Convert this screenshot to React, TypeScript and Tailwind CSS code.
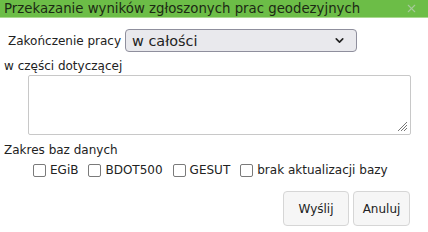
import { X, ChevronDown } from "lucide-react";

const font = { fontFamily: '"DejaVu Sans", Verdana, sans-serif' };

function Check({ label }: { label: string }) {
  return (
    <label className="flex items-center gap-[4px]">
      <span className="w-[13px] h-[13px] rounded-[2px] border border-[#7a7a7a] bg-white" />
      <span>{label}</span>
    </label>
  );
}

export default function App() {
  return (
    <div className="w-[428px] h-[232px] bg-white text-[#222] text-[12px] leading-[14px] overflow-hidden" style={font}>
      {/* Header */}
      <div className="flex items-center justify-between h-[18px] bg-[#6cbd47] pl-[4px] pr-[10px] border-b border-[#a9d98f]">
        <span className="text-[13.3px] leading-none text-[#1c2a14] whitespace-nowrap">Przekazanie wyników zgłoszonych prac geodezyjnych</span>
        <X size={13} strokeWidth={2} className="text-[#a6c99a]" />
      </div>

      <div className="flex items-center mt-[11px] pl-[8px] gap-[4px]">
        <span>Zakończenie pracy</span>
        <div className="flex items-center justify-between w-[232px] h-[23px] rounded-[4px] border border-[#8f8f9d] bg-[#e9e9ed] pl-[6px] pr-[10px]">
          <span className="text-[14.4px]">w całości</span>
          <ChevronDown size={13} strokeWidth={3} className="text-[#222]" />
        </div>
      </div>

      <div className="mt-[7px] pl-[4px]">w części dotyczącej</div>

      <div className="relative ml-[28px] mt-[2px] w-[383px] h-[60px] rounded-[2px] border border-[#c8c8c8] bg-white">
        <svg width="12" height="12" viewBox="0 0 12 12" className="absolute right-[2px] bottom-[2px]">
          <path d="M11 2 L2 11 M11 5 L5 11 M11 8 L8 11" stroke="#777" strokeWidth="1" />
        </svg>
      </div>

      <div className="mt-[8px] pl-[4px]">Zakres baz danych</div>

      <div className="flex items-center gap-[10px] mt-[6px] pl-[33px]">
        <Check label="EGiB" />
        <Check label="BDOT500" />
        <Check label="GESUT" />
        <Check label="brak aktualizacji bazy" />
      </div>

      <div className="flex justify-end gap-[4px] mt-[14px] pr-[18px]">
        <button className="w-[66px] h-[35px] rounded-[4px] border border-[#d6d6d6] bg-[#f6f6f6] text-[12px]">Wyślij</button>
        <button className="w-[57px] h-[35px] rounded-[4px] border border-[#d6d6d6] bg-[#f6f6f6] text-[12px]">Anuluj</button>
      </div>
    </div>
  );
}
